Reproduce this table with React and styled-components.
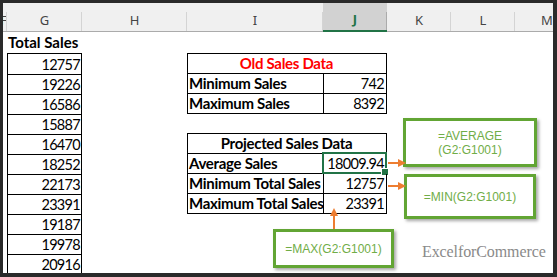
import React from "react";
import styled, { createGlobalStyle } from "styled-components";

const GlobalStyle = createGlobalStyle`
  html, body { margin: 0; padding: 0; background: #2a2a2a; }
  * { box-sizing: border-box; }
`;

const COLS = "4px 75px 105px 136px 64px 64px 64px 64px";

const Frame = styled.div`
  width: 557px;
  height: 277px;
  padding: 3px 4px 4px 3px;
  background: #2a2a2a;
`;

const Sheet = styled.div`
  position: relative;
  width: 100%;
  height: 100%;
  background: #fff;
  overflow: hidden;
  display: flex;
  flex-direction: column;
  font-family: Lato, "Liberation Sans", sans-serif;
  color: #000;
`;

const HeaderRow = styled.div`
  display: grid;
  grid-template-columns: ${COLS};
  height: 29px;
  flex: none;
  background: #f0f0f0;
  border-bottom: 1px solid #ababab;
`;

const ColHead = styled.div`
  position: relative;
  display: flex;
  align-items: center;
  justify-content: ${(p) => (p.$clip ? "flex-end" : "center")};
  padding-top: 5px;
  overflow: hidden;
  font-family: "Noto Sans", "Open Sans", sans-serif;
  font-size: 13px;
  color: ${(p) => (p.$active ? "#217346" : "#444")};
  font-weight: ${(p) => (p.$active ? 700 : 400)};
  background: ${(p) => (p.$active ? "#d2d2d2" : "transparent")};
  border-bottom: ${(p) => (p.$active ? "2px solid #217346" : "none")};
  margin-bottom: ${(p) => (p.$active ? "-1px" : "0")};
  &::after {
    content: "";
    position: absolute;
    right: 0;
    top: 9px;
    bottom: 0;
    width: 1px;
    background: ${(p) => (p.$active ? "#ababab" : "#d4d4d4")};
  }
`;

const Body = styled.div`
  display: grid;
  grid-template-columns: ${COLS};
  grid-template-rows: 21px repeat(11, 20px);
`;

const Title = styled.div`
  grid-column: 2;
  grid-row: 1;
  display: flex;
  align-items: flex-end;
  padding: 0 0 2px 1px;
  font-size: 15px;
  font-weight: 700;
  white-space: nowrap;
`;

const SalesList = styled.div`
  grid-column: 2;
  grid-row: 2 / span 11;
  border: 1px solid #000;
  border-bottom: none;
`;

const SalesCell = styled.div`
  height: 20px;
  border-top: ${(p) => (p.$first ? "none" : "1px solid #000")};
  display: flex;
  align-items: flex-end;
  justify-content: flex-end;
  padding: 0 1px 1px 0;
  font-size: 14.5px;
  letter-spacing: -0.7px;
`;

const DataTable = styled.div`
  grid-column: 4 / span 2;
  grid-row: ${(p) => p.$row} / span ${(p) => p.$rows};
  display: grid;
  grid-template-columns: 136px 63px;
  grid-auto-rows: 20px;
  border-top: 1px solid #000;
  border-left: 1px solid #000;
  align-self: start;
`;

const Cell = styled.div`
  position: relative;
  display: flex;
  align-items: flex-end;
  justify-content: ${(p) => (p.$right ? "flex-end" : p.$center ? "center" : "flex-start")};
  grid-column: ${(p) => (p.$span ? "1 / span 2" : "auto")};
  border-right: 1px solid #000;
  border-bottom: 1px solid #000;
  padding: 0 2px 1px 1px;
  font-size: ${(p) => (p.$bold ? "15px" : "14.5px")};
  font-weight: ${(p) => (p.$bold ? 700 : 400)};
  letter-spacing: ${(p) => (p.$bold ? "-0.3px" : "-0.7px")};
  color: ${(p) => p.$color || "#000"};
  white-space: nowrap;
`;

const Selection = styled.div`
  position: absolute;
  left: -2px;
  top: -2px;
  right: -1px;
  bottom: -1px;
  border: 2px solid #217346;
  pointer-events: none;
  &::after {
    content: "";
    position: absolute;
    right: -4px;
    bottom: -4px;
    width: 6px;
    height: 6px;
    background: #217346;
    border: 1px solid #fff;
  }
`;

const Callout = styled.div`
  position: absolute;
  left: ${(p) => p.$x}px;
  top: ${(p) => p.$y}px;
  width: ${(p) => p.$w}px;
  height: ${(p) => p.$h}px;
  display: flex;
  flex-direction: column;
  align-items: center;
  justify-content: center;
  background: #fff;
  border: 3px solid #62a534;
  box-shadow: 2px 2px 3px rgba(0, 0, 0, 0.35);
  font-family: "Liberation Sans", Arial, sans-serif;
  font-size: 12px;
  line-height: 14px;
  color: #70ad47;
  text-align: center;
`;

const ArrowWrap = styled.svg`
  position: absolute;
  left: ${(p) => p.$x}px;
  top: ${(p) => p.$y}px;
`;

const Watermark = styled.div`
  position: absolute;
  left: 419px;
  top: 240px;
  font-family: "Liberation Serif", "Times New Roman", serif;
  font-size: 16px;
  line-height: 17px;
  letter-spacing: -0.1px;
  color: #8a8a8a;
  white-space: nowrap;
`;

const ArrowRight = ({ x, y }) => (
  <ArrowWrap $x={x} $y={y} width="20" height="10" viewBox="0 0 20 10">
    <line x1="0" y1="5" x2="11" y2="5" stroke="#ed7d31" strokeWidth="2" />
    <polygon points="10,1 18,5 10,9" fill="#ed7d31" />
  </ArrowWrap>
);

const ArrowUp = ({ x, y }) => (
  <ArrowWrap $x={x} $y={y} width="10" height="21" viewBox="0 0 10 21">
    <line x1="5" y1="7" x2="5" y2="21" stroke="#ed7d31" strokeWidth="2" />
    <polygon points="1,8 5,0 9,8" fill="#ed7d31" />
  </ArrowWrap>
);

const columns = ["F", "G", "H", "I", "J", "K", "L", "M"];
const sales = [12757, 19226, 16586, 15887, 16470, 18252, 22173, 23391, 19187, 19978, 20916];

export default function App() {
  return (
    <>
      <GlobalStyle />
      <Frame>
        <Sheet>
          <HeaderRow>
            {columns.map((c, i) => (
              <ColHead key={c} $active={c === "J"} $clip={i === 0}>
                {c}
              </ColHead>
            ))}
          </HeaderRow>
          <Body>
            <Title>Total Sales</Title>
            <SalesList>
              {sales.map((v, i) => (
                <SalesCell key={i} $first={i === 0}>{v}</SalesCell>
              ))}
            </SalesList>

            <DataTable $row={2} $rows={3}>
              <Cell $span $center $bold $color="#ff0000">Old Sales Data</Cell>
              <Cell $bold>Minimum Sales</Cell>
              <Cell $right>742</Cell>
              <Cell $bold>Maximum Sales</Cell>
              <Cell $right>8392</Cell>
            </DataTable>

            <DataTable $row={6} $rows={4}>
              <Cell $span $center $bold>Projected Sales Data</Cell>
              <Cell $bold>Average Sales</Cell>
              <Cell $right>
                18009.94
                <Selection />
              </Cell>
              <Cell $bold>Minimum Total Sales</Cell>
              <Cell $right>12757</Cell>
              <Cell $bold>Maximum Total Sales</Cell>
              <Cell $right>23391</Cell>
            </DataTable>
          </Body>

          <Callout $x={400} $y={115} $w={134} $h={49}>
            <div>=AVERAGE</div>
            <div>(G2:G1001)</div>
          </Callout>
          <Callout $x={401} $y={171} $w={132} $h={45}>
            =MIN(G2:G1001)
          </Callout>
          <Callout $x={270} $y={226} $w={121} $h={39}>
            =MAX(G2:G1001)
          </Callout>

          <ArrowRight x={385} y={155} />
          <ArrowRight x={385} y={178} />
          <ArrowUp x={326} y={205} />

          <Watermark>ExcelforCommerce</Watermark>
        </Sheet>
      </Frame>
    </>
  );
}
